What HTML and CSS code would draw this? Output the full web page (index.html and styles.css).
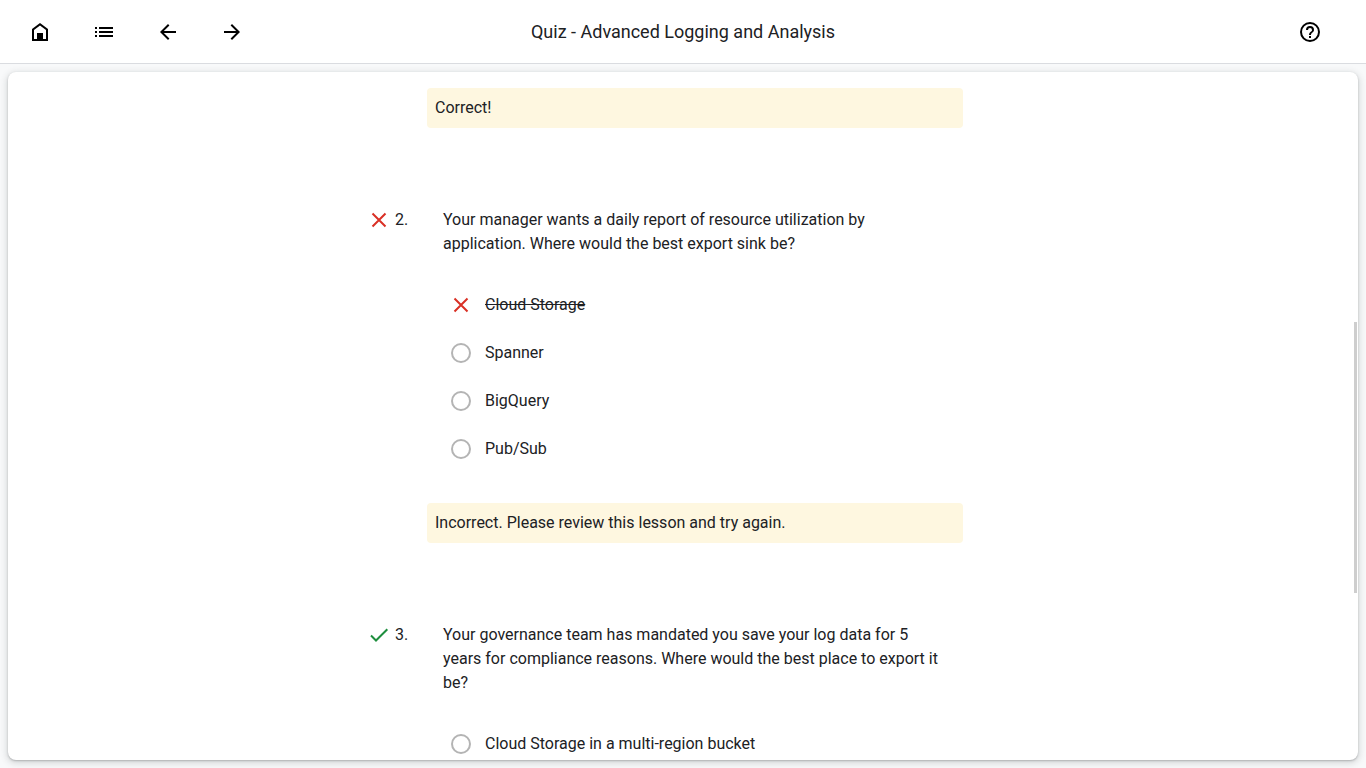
FILE: index.html
```html
<!DOCTYPE html>
<html lang="en">
<head>
<meta charset="utf-8">
<meta name="viewport" content="width=device-width, initial-scale=1">
<title>Quiz - Advanced Logging and Analysis</title>
<link rel="stylesheet" href="styles.css">
</head>
<body>
<header class="toolbar">
  <nav class="toolbar-nav" aria-label="Course">
    <a class="icon-button" href="#" aria-label="Home"><svg viewBox="0 0 24 24"><path fill-rule="evenodd" d="M4 21V9l8-6 8 6v12zM6 19h3v-6h6v6h3v-9l-6-4.500L6 10z"/></svg></a>
    <button class="icon-button" type="button" aria-label="Outline"><svg viewBox="0 0 24 24"><path d="M3 7h2v2H3zM3 11h2v2H3zM3 15h2v2H3zM7 7h14v2H7zM7 11h14v2H7zM7 15h14v2H7z"/></svg></button>
    <a class="icon-button" href="#" aria-label="Previous"><svg viewBox="0 0 24 24"><path d="M20 11H7.830l5.590-5.590L12 4l-8 8 8 8 1.410-1.410L7.830 13H20z"/></svg></a>
    <a class="icon-button" href="#" aria-label="Next"><svg viewBox="0 0 24 24"><path d="M12 4l-1.410 1.410L16.170 11H4v2h12.170l-5.580 5.590L12 20l8-8z"/></svg></a>
  </nav>
  <h1 class="title">Quiz - Advanced Logging and Analysis</h1>
  <div class="toolbar-end">
    <button class="icon-button" type="button" aria-label="Help"><svg viewBox="0 0 24 24"><path d="M11 18h2v-2h-2zM12 2a10 10 0 1 0 0 20 10 10 0 0 0 0-20zm0 18a8 8 0 1 1 0-16 8 8 0 0 1 0 16zm0-14a4 4 0 0 0-4 4h2a2 2 0 1 1 4 0c0 2-3 1.750-3 5h2c0-2.250 3-2.500 3-5a4 4 0 0 0-4-4z"/></svg></button>
  </div>
</header>
<main class="stage">
  <div class="panel">
    <form class="quiz">
      <section class="question">
        <p class="feedback">Correct!</p>
      </section>
      <section class="question">
        <svg class="mark wrong" viewBox="0 0 24 24"><path d="M5.500 5.500l13 13M18.500 5.500l-13 13"/></svg>
        <span class="number">2.</span>
        <p class="prompt" id="q2">Your manager wants a daily report of resource utilization by application. Where would the best export sink be?</p>
        <div class="options" role="radiogroup" aria-labelledby="q2">
          <label class="option rejected"><span class="control"><input class="radio" type="radio" name="q2"><svg class="mark wrong" viewBox="2 2 20 20"><path d="M5.500 5.500l13 13M18.500 5.500l-13 13"/></svg></span><span>Cloud Storage</span></label>
          <label class="option"><span class="control"><input class="radio" type="radio" name="q2"></span><span>Spanner</span></label>
          <label class="option"><span class="control"><input class="radio" type="radio" name="q2"></span><span>BigQuery</span></label>
          <label class="option"><span class="control"><input class="radio" type="radio" name="q2"></span><span>Pub/Sub</span></label>
        </div>
        <p class="feedback">Incorrect. Please review this lesson and try again.</p>
      </section>
      <section class="question">
        <svg class="mark right" viewBox="0 0 24 24"><path d="M4 12.500l5 5L20.300 6.200"/></svg>
        <span class="number">3.</span>
        <p class="prompt" id="q3">Your governance team has mandated you save your log data for 5 years for compliance reasons. Where would the best place to export it be?</p>
        <div class="options" role="radiogroup" aria-labelledby="q3">
          <label class="option"><span class="control"><input class="radio" type="radio" name="q3"></span><span>Cloud Storage in a multi-region bucket</span></label>
        </div>
      </section>
    </form>
    <div class="scroll-thumb"></div>
  </div>
</main>
</body>
</html>
```
FILE: styles.css
```css
* { box-sizing: border-box; }

body {
  margin: 0;
  height: 100vh;
  display: flex;
  flex-direction: column;
  background: #f8f9fa;
  color: #202124;
  font: 16px/24px Roboto, sans-serif;
}

p, h1 { margin: 0; }
svg { display: block; width: 24px; height: 24px; }

.toolbar {
  display: grid;
  grid-template-columns: 1fr auto 1fr;
  align-items: center;
  padding: 8px 32px 7px 16px;
  background: #fff;
  border-bottom: 1px solid #dadce0;
}
.toolbar-nav { display: flex; gap: 16px; }
.toolbar-end { display: flex; justify-content: flex-end; }
.title {
  padding-left: 16px;
  font: 400 18px/24px "Google Sans", "Product Sans", Roboto, sans-serif;
}
.icon-button {
  width: 48px;
  height: 48px;
  display: grid;
  place-items: center;
  padding: 0;
  border: 0;
  background: none;
  color: #000;
  cursor: pointer;
}
.icon-button svg { fill: currentColor; }

.stage {
  flex: 1;
  min-height: 0;
  display: flex;
  padding: 8px;
}
.panel {
  position: relative;
  flex: 1;
  overflow: hidden;
  padding: 16px 0;
  background: #fff;
  border-radius: 8px;
  box-shadow: 0 1px 2px rgba(60, 64, 67, .3), 0 2px 6px 2px rgba(60, 64, 67, .15);
}
.scroll-thumb {
  position: absolute;
  top: 36.3%;
  right: 1px;
  width: 3px;
  height: 39.4%;
  background: #cecece;
}

.quiz {
  display: flex;
  flex-direction: column;
  gap: 80px;
  max-width: 632px;
  margin: 0 auto;
  padding-right: 36px;
}
.question {
  display: grid;
  grid-template-columns: 28px 32px 1fr;
}
.mark { fill: none; stroke-width: 2; }
.wrong { stroke: #d93025; }
.right { stroke: #1e8e3e; }
.prompt { padding: 0 16px; }
.options {
  grid-column: 3;
  display: flex;
  flex-direction: column;
  padding: 25px 16px 30px 24px;
}
.option {
  display: flex;
  align-items: center;
  gap: 14px;
  min-height: 48px;
}
.rejected { text-decoration: line-through; }
.control {
  width: 20px;
  height: 20px;
  display: grid;
}
.control > * {
  grid-area: 1 / 1;
  width: 20px;
  height: 20px;
}
.radio {
  appearance: none;
  margin: 0;
  border: 2px solid #b4b4b4;
  border-radius: 50%;
}
.rejected .radio { opacity: 0; }
.feedback {
  grid-column: 3;
  padding: 8px;
  background: #fef7e0;
  border-radius: 4px;
}
```
